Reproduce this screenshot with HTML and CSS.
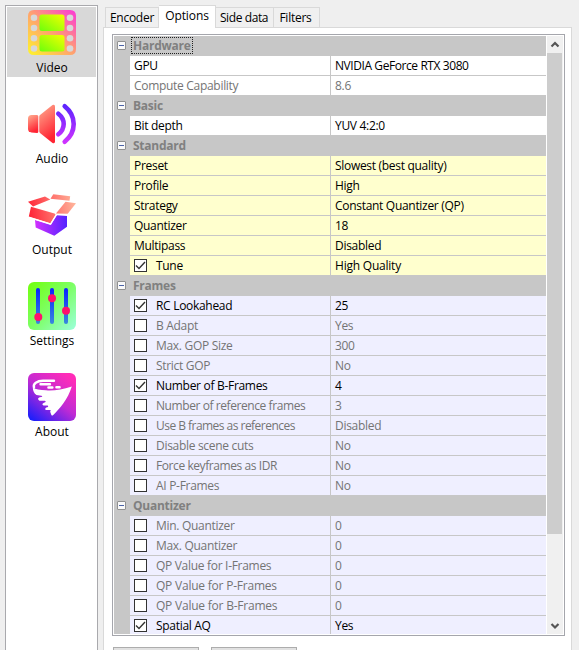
FILE: index.html
```html
<!DOCTYPE html>
<html lang="en">
<head>
<meta charset="utf-8">
<title>Encoder options</title>
<link rel="stylesheet" href="styles.css">
</head>
<body>
<svg width="0" height="0" class="defs">
  <defs>
    <linearGradient id="film" x1="0" y1="1" x2="1" y2="0"><stop offset="0" stop-color="#fff62a"/><stop offset=".5" stop-color="#ffa071"/><stop offset="1" stop-color="#fb37d8"/></linearGradient>
    <linearGradient id="lime" x1="0" y1="1" x2="1" y2="0"><stop offset="0" stop-color="#6bff0c"/><stop offset="1" stop-color="#f4ff00"/></linearGradient>
    <linearGradient id="red" x1="0" y1="0" x2=".35" y2="1"><stop offset="0" stop-color="#ffb092"/><stop offset="1" stop-color="#ff2433"/></linearGradient>
    <linearGradient id="wave" gradientUnits="userSpaceOnUse" x1="0" y1="5" x2="0" y2="43"><stop offset="0" stop-color="#5b24ff"/><stop offset="1" stop-color="#d033ff"/></linearGradient>
    <linearGradient id="flap" gradientUnits="userSpaceOnUse" x1="1" y1="20" x2="48" y2="12"><stop offset="0" stop-color="#ff2638"/><stop offset="1" stop-color="#ffb79c"/></linearGradient>
    <linearGradient id="box" x1="0" y1="0" x2="1" y2="0"><stop offset="0" stop-color="#d22fff"/><stop offset="1" stop-color="#5423ff"/></linearGradient>
    <linearGradient id="green" x1="0" y1="0" x2="1" y2="1"><stop offset="0" stop-color="#72ff0c"/><stop offset=".5" stop-color="#7dff66"/><stop offset="1" stop-color="#9cffdc"/></linearGradient>
    <linearGradient id="rail" gradientUnits="userSpaceOnUse" x1="0" y1="6" x2="0" y2="42"><stop offset="0" stop-color="#0722ff"/><stop offset="1" stop-color="#3989dc"/></linearGradient>
    <linearGradient id="storm" x1="0" y1="1" x2=".75" y2="0"><stop offset="0" stop-color="#0a1dff"/><stop offset=".55" stop-color="#c02bd4"/><stop offset="1" stop-color="#ff2cb8"/></linearGradient>
  </defs>
</svg>
<div class="window">
  <nav class="sidebar">
    <div class="item selected">
      <svg class="icon" viewBox="0 0 48 48"><path fill="url(#film)" d="M6 1h36q6 0 6 6v33q0 6-6 6H6q-6 0-6-6V7q0-6 6-6z"/><g fill="#d8d8d8"><circle cx="6" cy="8.7" r="3.3"/><circle cx="6" cy="19" r="3.3"/><circle cx="6" cy="29.3" r="3.3"/><circle cx="6" cy="39.5" r="3.3"/><circle cx="42" cy="8.7" r="3.3"/><circle cx="42" cy="19" r="3.3"/><circle cx="42" cy="29.3" r="3.3"/><circle cx="42" cy="39.5" r="3.3"/></g><rect x="11.5" y="5.5" width="25" height="16.5" rx="2.5" fill="url(#lime)"/><rect x="11.5" y="26" width="25" height="16.5" rx="2.5" fill="url(#lime)"/></svg>
      <span>Video</span>
    </div>
    <div class="item">
      <svg class="icon" viewBox="0 0 48 48"><path fill="url(#red)" d="M3.500 15H9q1.300 0 1.300 1.500v15Q10.300 33 9 33l-5.500-.5Q0 32 0 29V18.500Q0 15 3.500 15z"/><path fill="url(#red)" d="M12 15L24.500 5q2.500-1 2.500 1.500v35q0 2.500-2.500 1.500L12 33q-.8-.8-.8-2V17q0-1.300.8-2z"/><g fill="none" stroke="url(#wave)" stroke-width="4.600" stroke-linecap="round"><path d="M30.300 13.700c3.800 3 5.400 6 5.400 10.300s-1.800 7.500-5.400 10.300"/><path d="M36.700 6.300C42.500 11 45.700 17 45.700 24s-3.200 13-9 17.700"/></g></svg>
      <span>Audio</span>
    </div>
    <div class="item">
      <svg class="icon" viewBox="0 0 48 48"><path fill="url(#box)" d="M7 29l15.700 5 6-9.700L39 25v10.700l-12.700 9L7.700 36.500z"/><path fill="url(#flap)" d="M3 15.700L26.500 22.500q1.500.5.8 1.500l-5 8.300L.8 25.500z"/><path fill="url(#flap)" d="M0 10.700L17 5.500 22.300 8.500 5 15.500z"/><path fill="url(#flap)" d="M22.500 7.800L25.300 3.300l16.900 1.900-.7 4.600z"/><path fill="url(#flap)" d="M37.500 10.800l10.500 1.500-8.300 10.500-11.700-.3z"/><path fill="none" stroke="#fff" stroke-width="1.200" d="M.5 26.200l22.200 6.900 6-9.600H40"/></svg>
      <span>Output</span>
    </div>
    <div class="item">
      <svg class="icon" viewBox="0 0 48 48"><rect width="48" height="48" rx="6" fill="url(#green)"/><g fill="url(#rail)"><rect x="8" y="6" width="4" height="36" rx="2"/><rect x="22" y="6" width="4" height="36" rx="2"/><rect x="36" y="6" width="4" height="36" rx="2"/></g><g fill="#ff106c"><circle cx="10.300" cy="35" r="4"/><circle cx="24" cy="16.300" r="4"/><circle cx="38" cy="28.800" r="4"/></g></svg>
      <span>Settings</span>
    </div>
    <div class="item">
      <svg class="icon" viewBox="0 0 48 48"><rect width="48" height="48" rx="6" fill="url(#storm)"/><path fill="#fff" d="M43.800 13.500C40 26 31.500 36 25 42.200q-1.500 1.200-2-1.200-1.500-2.300-.3-4h-4.500q-2-.8 0-2.600 3-.6 1.500-2h-4.200q-2.500-1.200.5-2.700 3-.8.8-2h-5.300q-3-1.900.2-3.400 4-.6 1.800-1.600l-5-.6q-3.500-2.300-3.700-7.300Q9 17.200 18 17.300q11 1 25.800-3.800z"/><path fill="none" stroke="#fff" stroke-width="2.400" stroke-linecap="round" d="M6 14.500C4.800 10.500 9 7.800 15 7.800h11M22 11.300H12.500"/><path fill="none" stroke="#fff" stroke-width="2.600" stroke-linecap="round" d="M20.500 14.500h3.800M28.500 14.200h3"/></svg>
      <span>About</span>
    </div>
  </nav>
  <main class="notebook">
    <div class="tabs"><div class="tab w-encoder">Encoder</div><div class="tab active w-options">Options</div><div class="tab w-side">Side data</div><div class="tab w-filters">Filters</div></div>
    <section class="page">
      <div class="gridbox">
        <div class="rows">
          <div class="head"><i></i><b class="focus">Hardware</b></div>
          <div class="row"><span>GPU</span><span class="tight">NVIDIA GeForce RTX 3080</span></div>
          <div class="row off"><span>Compute Capability</span><span>8.6</span></div>
          <div class="head"><i></i><b>Basic</b></div>
          <div class="row"><span>Bit depth</span><span>YUV 4:2:0</span></div>
          <div class="head"><i></i><b>Standard</b></div>
          <div class="row yellow"><span>Preset</span><span>Slowest (best quality)</span></div>
          <div class="row yellow"><span>Profile</span><span>High</span></div>
          <div class="row yellow"><span>Strategy</span><span>Constant Quantizer (QP)</span></div>
          <div class="row yellow"><span>Quantizer</span><span>18</span></div>
          <div class="row yellow"><span>Multipass</span><span>Disabled</span></div>
          <div class="row yellow"><span><svg class="check" viewBox="0 0 11 11"><path d="M1 5.500l3 3L10 2"/></svg>Tune</span><span class="wide">High Quality</span></div>
          <div class="head"><i></i><b>Frames</b></div>
          <div class="row blue"><span><svg class="check" viewBox="0 0 11 11"><path d="M1 5.500l3 3L10 2"/></svg>RC Lookahead</span><span>25</span></div>
          <div class="row blue off"><span><svg class="check"></svg>B Adapt</span><span>Yes</span></div>
          <div class="row blue off"><span><svg class="check"></svg>Max. GOP Size</span><span>300</span></div>
          <div class="row blue off"><span><svg class="check"></svg>Strict GOP</span><span>No</span></div>
          <div class="row blue"><span><svg class="check" viewBox="0 0 11 11"><path d="M1 5.500l3 3L10 2"/></svg>Number of B-Frames</span><span>4</span></div>
          <div class="row blue off"><span class="tight"><svg class="check"></svg>Number of reference frames</span><span>3</span></div>
          <div class="row blue off"><span class="tighter"><svg class="check"></svg>Use B frames as references</span><span>Disabled</span></div>
          <div class="row blue off"><span><svg class="check"></svg>Disable scene cuts</span><span>No</span></div>
          <div class="row blue off"><span class="tight"><svg class="check"></svg>Force keyframes as IDR</span><span>No</span></div>
          <div class="row blue off"><span><svg class="check"></svg>AI P-Frames</span><span>No</span></div>
          <div class="head"><i></i><b>Quantizer</b></div>
          <div class="row blue off"><span><svg class="check"></svg>Min. Quantizer</span><span>0</span></div>
          <div class="row blue off"><span><svg class="check"></svg>Max. Quantizer</span><span>0</span></div>
          <div class="row blue off"><span><svg class="check"></svg>QP Value for I-Frames</span><span>0</span></div>
          <div class="row blue off"><span class="wide"><svg class="check"></svg>QP Value for P-Frames</span><span>0</span></div>
          <div class="row blue off"><span class="wide"><svg class="check"></svg>QP Value for B-Frames</span><span>0</span></div>
          <div class="row blue"><span><svg class="check" viewBox="0 0 11 11"><path d="M1 5.500l3 3L10 2"/></svg>Spatial AQ</span><span>Yes</span></div>
        </div>
        <div class="scrollbar">
          <svg class="arrow" viewBox="0 0 16 17"><path d="M4.500 10.500L8 7l3.500 3.500"/></svg>
          <div class="thumb"></div>
          <svg class="arrow" viewBox="0 0 16 17"><path d="M4.500 7L8 10.500 11.500 7"/></svg>
        </div>
      </div>
      <div class="buttons"><div></div><div></div></div>
    </section>
  </main>
</div>
</body>
</html>
```
FILE: styles.css
```css
* { box-sizing: border-box; }
body { margin: 0; width: 579px; height: 650px; overflow: hidden; background: #efefef; color: #000; font: 12px/20px "Open Sans", "Noto Sans", sans-serif; letter-spacing: -0.25px; white-space: nowrap; }
.defs { display: block; height: 0; }
.window { display: flex; width: 579px; height: 650px; overflow: hidden; }
.sidebar { flex: none; width: 93px; height: 660px; margin: 5px 0 0 5px; padding: 1px; border: 1px solid #a9a9ad; background: #fff; }
.item { height: 70px; margin-bottom: 21px; padding-top: 2px; display: flex; flex-direction: column; align-items: center; }
.selected { background: #d8d8d8; }
.icon { width: 48px; height: 48px; display: block; flex: none; }
.item span { margin-top: 1px; padding-left: 1px; letter-spacing: 0; }
.notebook { width: 469px; margin: 5px 0 0 5px; display: flex; flex-direction: column; }
.tabs { display: flex; align-items: flex-end; height: 23px; padding-left: 2px; position: relative; z-index: 1; }
.tab { height: 21px; border: 1px solid #d9d9d9; border-left-width: 0; text-align: center; line-height: 20px; background: #f0f0f0; }
.tab.active { height: 23px; border-bottom: 0; background: #fff; line-height: 20px; }
.w-encoder { width: 54px; border-left-width: 1px; }
.w-options { width: 57px; letter-spacing: -0.1px; }
.w-side { width: 58px; padding-right: 1px; letter-spacing: -0.4px; }
.w-filters { width: 46px; padding-right: 2px; }
.page { height: 640px; margin-top: -1px; padding: 6px 0 0 8px; border: 1px solid #d9d9d9; background: #fff; }
.gridbox { display: flex; width: 453px; height: 602px; padding: 1px; border: 1px solid #a5a6ac; justify-content: space-between; }
.rows { width: 432px; height: 598px; overflow: hidden; background: #c7c7c7; }
.head { display: flex; align-items: flex-start; height: 20px; color: #808080; }
.head i { width: 9px; height: 9px; margin: 5px 5px 0 3px; border: 1px solid #919191; border-radius: 1px; background: linear-gradient(#4b63a7, #4b63a7) center / 5px 1px no-repeat #fafafa; }
.head b { height: 17px; margin-top: 1px; padding: 0 2px; line-height: 17px; font-weight: 700; }
.head .focus { outline: 1px dotted #222; outline-offset: -1px; }
.row { display: grid; grid-template-columns: 200px 215px; column-gap: 1px; height: 20px; padding: 0 0 1px 16px; letter-spacing: -0.3px; }
.row > span { display: flex; align-items: center; height: 19px; padding-left: 4px; background: #fff; }
.yellow > span { background: #ffffce; }
.blue > span { background: #efefff; }
.off { color: #747474; }
.wide { letter-spacing: -0.22px; }
.tight { letter-spacing: -0.42px; }
.tighter { letter-spacing: -0.53px; }
.check { flex: none; width: 13px; height: 13px; margin-right: 9px; border: 1px solid #333; background: #fff; }
.check path { fill: none; stroke: #333; stroke-width: 1.4; }
.scrollbar { display: flex; flex-direction: column; justify-content: flex-start; width: 16px; height: 598px; background: #f0f0f0; }
.arrow { display: block; flex: none; width: 16px; height: 17px; }
.arrow path { fill: none; stroke: #555; stroke-width: 2.2; }
.thumb { width: 15px; height: 481px; margin-bottom: 83px; background: #cdcdcd; }
.buttons { display: flex; gap: 12px; margin-top: 11px; padding-left: 1px; }
.buttons div { width: 86px; height: 25px; border: 1px solid #adadad; background: #e1e1e1; }
```
